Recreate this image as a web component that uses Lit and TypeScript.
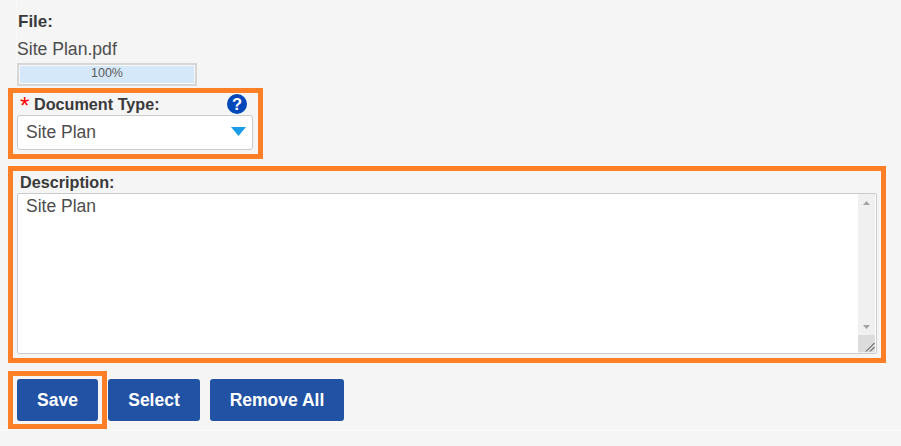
import { LitElement, html, css } from "lit";
import { customElement } from "lit/decorators.js";

@customElement("app-root")
export class AppRoot extends LitElement {
  static styles = css`
    :host {
      display: block;
      width: 901px;
      height: 446px;
      background: #f5f5f5;
      font-family: "Liberation Sans", Arial, sans-serif;
      color: #4d4d4d;
      overflow: hidden;
    }
    .page {
      position: relative;
      height: 431px;
      box-sizing: border-box;
      padding: 12px 15px 0 8px;
      border-bottom: 1px solid #fafafa;
    }
    .rule {
      position: absolute;
      left: 16px;
      top: 0;
      width: 1px;
      height: 76px;
      background: #fafafa;
    }
    .file {
      padding-left: 10px;
      height: 76px;
      display: flex;
      flex-direction: column;
      align-items: flex-start;
    }
    .file-label {
      font-size: 17px;
      line-height: 20px;
      font-weight: bold;
      color: #3a3a3a;
    }
    .file-name {
      font-size: 17.6px;
      line-height: 20px;
      margin-top: 7px;
      margin-left: -1px;
    }
    .progress {
      margin-top: 4px;
      margin-left: -1px;
      width: 180px;
      height: 23px;
      box-sizing: border-box;
      border: 2px solid #d6d6d6;
      padding: 1px;
      background: #f8f8f8;
    }
    .bar {
      height: 100%;
      background: #d5e8f9;
      text-align: center;
      font-size: 12.5px;
      line-height: 15px;
      color: #5a5a5a;
    }
    .mark {
      border: 5px solid #ff7f27;
      box-sizing: border-box;
    }
    .doc {
      width: 255px;
      height: 71px;
      padding: 0 5px 0 4px;
    }
    .doc-head {
      display: flex;
      align-items: center;
      height: 22px;
      padding-left: 3px;
      padding-right: 6px;
    }
    .star {
      color: #f00;
      font-size: 24px;
      line-height: 26px;
      font-weight: normal;
      width: 14px;
      height: 22px;
    }
    .label {
      font-size: 16.2px;
      font-weight: bold;
      color: #3a3a3a;
      line-height: 22px;
    }
    .help {
      margin-left: auto;
      width: 20px;
      height: 20px;
      border-radius: 50%;
      background: #0047ba;
      color: #fff;
      font-size: 16.5px;
      font-weight: bold;
      line-height: 20px;
      text-align: center;
    }
    .select {
      height: 35px;
      box-sizing: border-box;
      border: 1px solid #ccc;
      border-radius: 3px;
      background: #fff;
      font-size: 17.5px;
      line-height: 33px;
      padding: 0 0 0 8px;
      display: flex;
      align-items: center;
      justify-content: space-between;
    }
    .caret {
      width: 15px;
      height: 9px;
      margin-right: 6px;
      margin-bottom: 2px;
    }
    .desc {
      width: 878px;
      height: 197px;
      margin-top: 7px;
      padding: 0 4px;
    }
    .desc-label {
      height: 22px;
      line-height: 22px;
      font-size: 16.2px;
      font-weight: bold;
      color: #3a3a3a;
      padding-left: 3px;
    }
    .area {
      position: relative;
      height: 161px;
      box-sizing: border-box;
      border: 1px solid #ccc;
      border-radius: 2px;
      background: #fff;
      display: flex;
    }
    .area-text {
      flex: 1;
      font-size: 17.5px;
      line-height: 22px;
      padding: 1px 8px;
    }
    .scroll {
      width: 17px;
      margin-right: 1px;
      background: #f0f0f0;
      display: flex;
      flex-direction: column;
      justify-content: space-between;
      align-items: center;
      padding: 7px 0 24px;
      box-sizing: border-box;
    }
    .arrow {
      width: 7px;
      height: 4px;
      display: block;
    }
    .grip {
      position: absolute;
      right: 1px;
      bottom: 1px;
      width: 17px;
      height: 17px;
      background: #dcdcdc;
    }
    .grip svg {
      display: block;
    }
    .actions {
      display: flex;
      align-items: flex-start;
      margin-top: 8px;
    }
    .save-mark {
      width: 99px;
      height: 58px;
      padding: 3px 4px;
      margin-right: 1px;
    }
    .btn {
      background: #2152a3;
      color: #fff;
      font: bold 17.5px/42px "Liberation Sans", Arial, sans-serif;
      height: 42px;
      border-radius: 3px;
      text-align: center;
      box-sizing: border-box;
    }
    .save { width: 81px; }
    .select-btn { width: 92px; margin-top: 8px; margin-right: 10px; }
    .remove { width: 134px; margin-top: 8px; }
  `;

  render() {
    return html`
      <div class="page">
        <div class="rule"></div>
        <div class="file">
          <div class="file-label">File:</div>
          <div class="file-name">Site Plan.pdf</div>
          <div class="progress"><div class="bar">100%</div></div>
        </div>
        <div class="mark doc">
          <div class="doc-head">
            <span class="star">*</span>
            <span class="label">Document Type:</span>
            <span class="help">?</span>
          </div>
          <div class="select">
            <span>Site Plan</span>
            <svg class="caret" viewBox="0 0 15 9"><path d="M0 0H15L7.5 9Z" fill="#1a9de8"></path></svg>
          </div>
        </div>
        <div class="mark desc">
          <div class="desc-label">Description:</div>
          <div class="area">
            <div class="area-text">Site Plan</div>
            <div class="scroll">
              <svg class="arrow" viewBox="0 0 7 4"><path d="M3.5 0L7 4H0Z" fill="#a3a3a3"></path></svg>
              <svg class="arrow" viewBox="0 0 7 4"><path d="M0 0H7L3.5 4Z" fill="#a3a3a3"></path></svg>
            </div>
            <div class="grip">
              <svg width="17" height="17" viewBox="0 0 17 17"><path d="M8 16.5L16.5 8M12 16.5L16.5 12" stroke="#333" stroke-width="1" fill="none"></path></svg>
            </div>
          </div>
        </div>
        <div class="actions">
          <div class="mark save-mark"><div class="btn save">Save</div></div>
          <div class="btn select-btn">Select</div>
          <div class="btn remove">Remove All</div>
        </div>
      </div>
    `;
  }
}
